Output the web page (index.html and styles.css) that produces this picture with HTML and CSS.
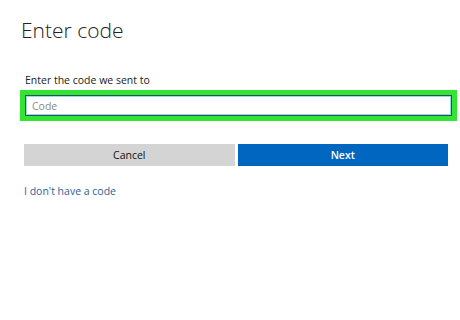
FILE: index.html
```html
<!DOCTYPE html>
<html lang="en">

<head>
    <meta charset="UTF-8">
    <meta name="viewport" content="width=device-width, initial-scale=1.0">
    <title>Enter code</title>
    <link rel="stylesheet" href="styles.css">
</head>

<body>

    <div class="container">
        <h1>Enter code</h1>
        <form id="code-form">
            <label for="code">Enter the code we sent to</label>
            <div class="highlight">
                <input type="text" id="code" placeholder="Code">
            </div>
            <div class="buttons">
                <button type="button" class="cancel">Cancel</button>
                <button type="submit" class="next">Next</button>
            </div>
        </form>
        <a href="#" class="no-code">I don't have a code</a>
    </div>

</body>

</html>
```

FILE: styles.css
```css
body {
    font-family: "Open Sans", Arial, sans-serif;
    background-color: #fff;
    margin: 0;
    padding: 0;
}

.container {
    padding: 14px 0 0 20px;
}

h1 {
    font-size: 21px;
    font-weight: 300;
    color: #222;
    margin: 0 0 0 1px;
    line-height: 32px;
}

form {
    margin-top: 27px;
}

label {
    display: block;
    font-size: 10.5px;
    color: #222;
    margin-left: 5px;
    line-height: 14px;
}

.highlight {
    width: 427px;
    margin-top: 3px;
    border: 5px solid #33e433;
}

.highlight input {
    display: block;
    width: 100%;
    height: 21px;
    box-sizing: border-box;
    border: 1px solid #1e5560;
    box-shadow: inset 0 0 0 1px #9fd6e8;
    padding: 0 6px;
    font-family: inherit;
    font-size: 10.5px;
    color: #333;
    outline: none;
}

.highlight input::placeholder {
    color: #8a8a8a;
}

.buttons {
    display: flex;
    gap: 3px;
    width: 424px;
    margin: 23px 0 0 4px;
}

.buttons button {
    flex: 1;
    height: 22px;
    border: none;
    font-family: inherit;
    font-size: 10.5px;
    cursor: pointer;
}

.cancel {
    background-color: #d4d4d4;
    color: #111;
}

.next {
    background-color: #0066c0;
    color: #fff;
    font-weight: 600;
}

.no-code {
    display: inline-block;
    margin: 18px 0 0 4px;
    font-size: 10.5px;
    color: #2a6496;
    text-decoration: none;
}
```
